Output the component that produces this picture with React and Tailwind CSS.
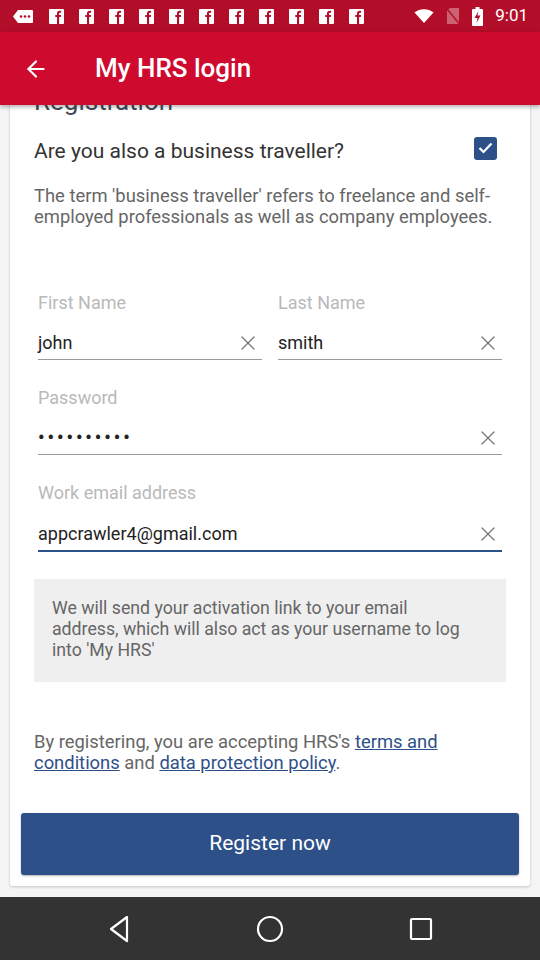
import React from "react";
import { ArrowLeft, X } from "lucide-react";

const FbIcon = () => (
  <svg width="15" height="15" viewBox="0 0 15 15">
    <rect width="15" height="15" rx="1" fill="white" />
    <path d="M8 15V8H6.3V6H8V4.4C8 2.7 9 1.8 10.6 1.8c.7 0 1.3.1 1.5.1v1.8h-1c-.8 0-1 .4-1 1V6h2l-.3 2h-1.7v7z" fill="#b20e29" />
  </svg>
);

const StatusBar = () => (
  <div className="h-8 bg-[#b20e29] flex items-center justify-between px-3 text-white">
    <div className="flex items-center gap-[15px]">
      <svg width="22" height="15" viewBox="0 0 22 15">
        <path d="M6 1h14a1 1 0 0 1 1 1v11a1 1 0 0 1-1 1H6L1 7.5z" fill="white" />
        <circle cx="9" cy="7.5" r="1.3" fill="#b20e29" />
        <circle cx="13" cy="7.5" r="1.3" fill="#b20e29" />
        <circle cx="17" cy="7.5" r="1.3" fill="#b20e29" />
      </svg>
      {Array.from({ length: 11 }).map((_, i) => (
        <FbIcon key={i} />
      ))}
    </div>
    <div className="flex items-center gap-[12px]">
      <svg width="20" height="16" viewBox="0 0 20 16">
        <path d="M10 15L0.5 4.5C5.5 0 14.5 0 19.5 4.5z" fill="white" />
      </svg>
      <svg width="14" height="18" viewBox="0 0 14 18">
        <path d="M4 1h9v16H1V4z" fill="white" opacity="0.35" />
        <path d="M0.5 1.5L13.5 17" stroke="#b20e29" strokeWidth="1.5" />
      </svg>
      <svg width="11" height="19" viewBox="0 0 11 19">
        <rect x="3.5" y="0" width="4" height="2" fill="white" />
        <rect x="0" y="2" width="11" height="17" rx="1" fill="white" />
        <path d="M6.5 4L2.5 11h3l-1 5 4-7.5h-3z" fill="#b20e29" />
      </svg>
      <span className="text-[17px] font-['Roboto',sans-serif]">9:01</span>
    </div>
  </div>
);

const Toolbar = () => (
  <div className="h-[73px] bg-[#cf0a2f] flex items-center relative z-10 shadow-[0_2px_4px_rgba(0,0,0,0.3)]">
    <ArrowLeft className="ml-[23px] text-white" size={26} strokeWidth={2} />
    <span className="ml-[46px] text-white text-[26px] font-medium">My HRS login</span>
  </div>
);

const Field = ({ label, value, active, className = "" }) => (
  <div className={className}>
    <div className="text-[18px] leading-[20px] text-[#b9b9b9] px-1">{label}</div>
    <div
      className={`flex items-center justify-between mx-1 ${
        active ? "mt-[19px] border-b-2 border-[#2e5089] pb-1" : "mt-[18px] border-b border-[#9a9a9a] pb-1"
      }`}
    >
      <span className="text-[18px] leading-[24px] text-[#222]">{value}</span>
      <X size={24} strokeWidth={1.3} className="text-[#777] mr-[2px]" />
    </div>
  </div>
);

const NavBar = () => (
  <div className="h-[63px] bg-[#333333] flex items-center justify-center gap-[111px]">
    <div className="w-[40px] flex justify-center">
      <svg width="22" height="28" viewBox="0 0 22 28">
        <path d="M19 2L3 14l16 12z" fill="none" stroke="white" strokeWidth="2.2" strokeLinejoin="round" />
      </svg>
    </div>
    <div className="w-[40px] flex justify-center">
      <svg width="28" height="28" viewBox="0 0 28 28">
        <circle cx="14" cy="14" r="12" fill="none" stroke="white" strokeWidth="2.2" />
      </svg>
    </div>
    <div className="w-[40px] flex justify-center">
      <svg width="24" height="24" viewBox="0 0 24 24">
        <rect x="2" y="2" width="20" height="20" rx="1" fill="none" stroke="white" strokeWidth="2.2" />
      </svg>
    </div>
  </div>
);

export default function App() {
  return (
    <div className="w-[540px] h-[960px] flex flex-col bg-[#f5f5f5] font-['Roboto',sans-serif] overflow-hidden">
      <StatusBar />
      <Toolbar />
      <div className="flex-1 overflow-hidden">
        <div className="mt-[-34px] mx-[10px] bg-white rounded-[3px] shadow-[0_1px_3px_rgba(0,0,0,0.2)] px-[24px] pt-[16px] pb-[11px]">
          <h1 className="text-[26px] leading-[28px] text-[#454c58]">Registration</h1>

          <div className="mt-[24px] flex items-center justify-between">
            <span className="text-[21px] leading-[24px] text-[#333]">Are you also a business traveller?</span>
            <div className="w-[23px] h-[23px] bg-[#2e5089] rounded-[3px] flex items-center justify-center mr-[9px] -mt-[6px]">
              <svg width="15" height="12" viewBox="0 0 15 12">
                <path d="M1.5 6l4 4 8-8.5" fill="none" stroke="white" strokeWidth="2.2" />
              </svg>
            </div>
          </div>

          <p className="mt-[22px] text-[18.4px] leading-[21px] text-[#666]">
            The term 'business traveller' refers to freelance and self-employed professionals as well as company employees.
          </p>

          <div className="mt-[66px] grid grid-cols-2 gap-[8px]">
            <Field label="First Name" value="john" />
            <Field label="Last Name" value="smith" />
          </div>

          <Field
            className="mt-[28px]"
            label="Password"
            value={<span className="tracking-[3px] font-bold">••••••••••</span>}
          />

          <Field className="mt-[28px]" label="Work email address" value="appcrawler4@gmail.com" active />

          <div className="mt-[27px] bg-[#efefef] pl-[18px] pr-[28px] pt-[19px] pb-[21px] text-[17.7px] leading-[21px] text-[#666]">
            We will send your activation link to your email address, which will also act as your username to log into 'My HRS'
          </div>

          <p className="mt-[49px] text-[18.4px] leading-[21px] text-[#666]">
            By registering, you are accepting HRS's{" "}
            <span className="text-[#2e5089] underline">terms and conditions</span> and{" "}
            <span className="text-[#2e5089] underline">data protection policy</span>.
          </p>

          <button className="mt-[40px] -mx-[13px] w-[calc(100%+26px)] h-[62px] bg-[#2e5089] rounded-[3px] text-white text-[21px] shadow-[0_1px_2px_rgba(0,0,0,0.3)]">
            Register now
          </button>
        </div>
      </div>
      <NavBar />
    </div>
  );
}
